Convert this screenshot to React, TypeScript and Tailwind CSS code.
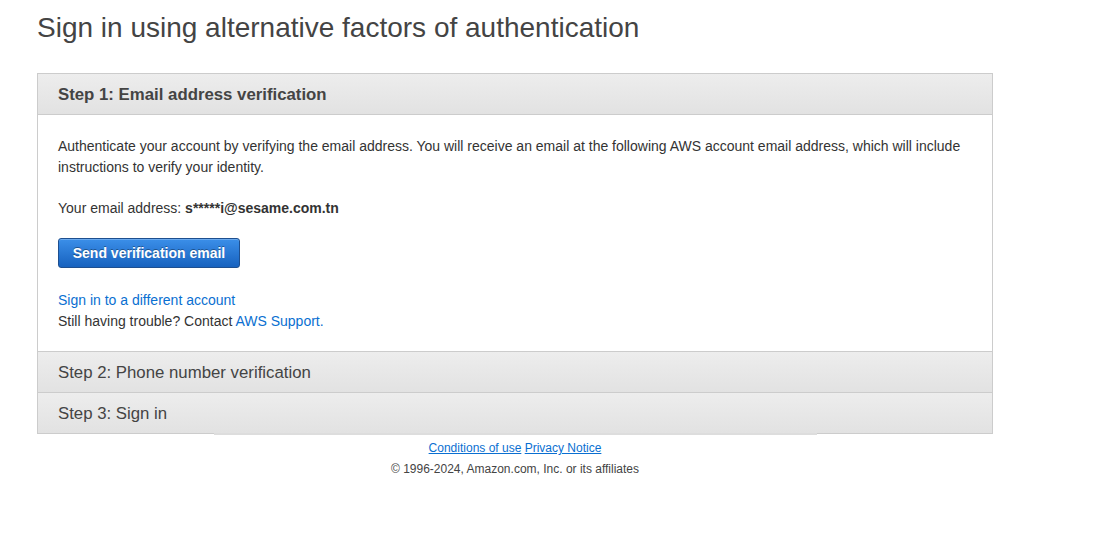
export default function App() {
  return (
    <main className="min-h-screen bg-white px-[37px] font-['Liberation_Sans',Arial,sans-serif] text-[#444]">
      <h1 className="pt-[12px] text-[28px] leading-[32px] font-normal text-[#444]">
        Sign in using alternative factors of authentication
      </h1>

      <div className="mt-[29px] w-[956px]">
        <div className="border border-[#cccccc]">
          <div className="h-[41px] flex items-center pl-[20px] pt-[1px] bg-gradient-to-b from-[#ededed] to-[#e2e2e2] border-b border-[#cccccc]">
            <h2 className="text-[16.8px] font-bold text-[#444]">Step 1: Email address verification</h2>
          </div>

          <div className="px-[20px] pt-[21px] pb-[19px] text-[14px] leading-[21px] text-[#333] border-b border-[#cccccc]">
            <p>
              Authenticate your account by verifying the email address. You will receive an email at the following AWS account email address, which will include instructions to verify your identity.
            </p>
            <p className="mt-[20px]">
              Your email address: <span className="font-bold">s*****i@sesame.com.tn</span>
            </p>
            <button className="mt-[19px] h-[30px] w-[182px] rounded-[3px] border border-[#1e4f8f] bg-gradient-to-b from-[#3b8fe9] to-[#1762bf] text-white font-bold text-[14px] [text-shadow:0_-1px_0_rgba(0,0,0,0.35)] shadow-[inset_0_1px_0_rgba(255,255,255,0.25)]">
              Send verification email
            </button>
            <div className="mt-[22px]">
              <a href="#" className="text-[#0a6fd1] hover:underline">Sign in to a different account</a>
              <p>
                Still having trouble? Contact <a href="#" className="text-[#0a6fd1] hover:underline">AWS Support.</a>
              </p>
            </div>
          </div>

          <div className="h-[41px] flex items-center pl-[20px] pt-[1px] bg-gradient-to-b from-[#ededed] to-[#e2e2e2] border-b border-[#cccccc]">
            <h2 className="text-[16.8px] text-[#444]">Step 2: Phone number verification</h2>
          </div>
          <div className="h-[40px] flex items-center pl-[20px] pt-[1px] bg-gradient-to-b from-[#ededed] to-[#e2e2e2]">
            <h2 className="text-[16.8px] text-[#444]">Step 3: Sign in</h2>
          </div>
        </div>

        <footer className="mx-auto w-[603px] border-t-2 border-[#dddddd] -mt-[1px] pt-[4px] text-center text-[12px] text-[#444]">
          <div className="leading-[18px]">
            <a href="#" className="text-[#0a6fd1] underline">Conditions of use</a>{" "}
            <a href="#" className="text-[#0a6fd1] underline">Privacy Notice</a>
          </div>
          <p className="mt-[3px] leading-[18px]">© 1996-2024, Amazon.com, Inc. or its affiliates</p>
        </footer>
      </div>
    </main>
  );
}
